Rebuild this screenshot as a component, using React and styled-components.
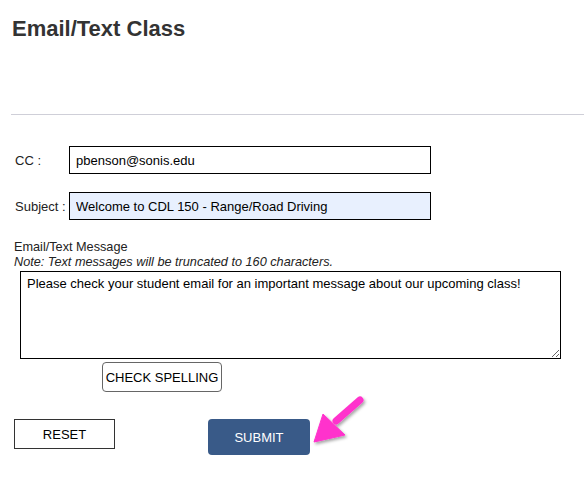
import React from "react";
import styled, { createGlobalStyle } from "styled-components";

const GlobalStyle = createGlobalStyle`
  body {
    margin: 0;
    background: #fff;
    font-family: "Liberation Sans", Arial, sans-serif;
    color: #000;
  }
`;

const App = () => {
  return (
    <Page>
      <GlobalStyle />
      <Title>Email/Text Class</Title>
      <Divider />
      <Form>
        <FieldRow>
          <Label>CC :</Label>
          <TextInput defaultValue="pbenson@sonis.edu" />
        </FieldRow>
        <FieldRow>
          <Label>Subject :</Label>
          <TextInput filled defaultValue="Welcome to CDL 150 - Range/Road Driving" />
        </FieldRow>
        <MessageBlock>
          <MessageLabel>Email/Text Message</MessageLabel>
          <Note>Note: Text messages will be truncated to 160 characters.</Note>
          <MessageBox defaultValue="Please check your student email for an important message about our upcoming class!" />
        </MessageBlock>
        <SpellButton>CHECK SPELLING</SpellButton>
        <ActionRow>
          <ResetButton>RESET</ResetButton>
          <SubmitButton>SUBMIT</SubmitButton>
          <Arrow width="70" height="60" viewBox="0 0 70 60">
            <defs>
              <filter id="sh" x="-20%" y="-20%" width="150%" height="150%">
                <feDropShadow dx="1.5" dy="2" stdDeviation="1.5" floodColor="#000" floodOpacity="0.35" />
              </filter>
            </defs>
            <g filter="url(#sh)" fill="#ff33cc" stroke="#ff33cc">
              <line x1="52" y1="10" x2="28" y2="31" strokeWidth="7" strokeLinecap="round" />
              <polygon points="6,52 15,24 37,45" strokeWidth="1" strokeLinejoin="round" />
            </g>
          </Arrow>
        </ActionRow>
      </Form>
    </Page>
  );
};

const Page = styled.div`
  width: 584px;
  min-height: 478px;
  padding-top: 17px;
  box-sizing: border-box;
`;

const Title = styled.h1`
  margin: 0 0 0 12px;
  font-size: 22px;
  line-height: 24px;
  font-weight: bold;
  color: #333;
`;

const Divider = styled.hr`
  margin: 73px 0 0 11px;
  border: 0;
  border-top: 1px solid #cfcfd8;
  height: 0;
`;

const Form = styled.div`
  display: flex;
  flex-direction: column;
  padding-top: 31px;
`;

const FieldRow = styled.div`
  display: flex;
  align-items: center;
  margin-bottom: 18px;
`;

const Label = styled.span`
  width: 54px;
  padding-left: 15px;
  font-size: 13px;
  color: #222;
`;

const TextInput = styled.input`
  width: 362px;
  height: 28px;
  box-sizing: border-box;
  border: 1px solid #000;
  padding: 0 6px;
  font-family: "Liberation Sans", Arial, sans-serif;
  font-size: 13px;
  color: #000;
  background: ${(p) => (p.filled ? "#e8f0fe" : "#fff")};
  outline: none;
`;

const MessageBlock = styled.div`
  display: flex;
  flex-direction: column;
  padding-left: 14px;
  margin-top: 2px;
`;

const MessageLabel = styled.div`
  font-size: 12.7px;
  line-height: 15px;
  color: #222;
`;

const Note = styled.div`
  font-size: 12.7px;
  line-height: 15px;
  font-style: italic;
  color: #222;
`;

const MessageBox = styled.textarea`
  margin: 1px 0 0 6px;
  width: 541px;
  height: 88px;
  box-sizing: border-box;
  border: 1px solid #000;
  padding: 4px 6px;
  font-family: "Liberation Sans", Arial, sans-serif;
  font-size: 13px;
  color: #000;
  resize: vertical;
  outline: none;
`;

const SpellButton = styled.button`
  align-self: flex-start;
  margin: 3px 0 0 102px;
  width: 120px;
  height: 30px;
  border: 1px solid #666;
  border-radius: 4px;
  background: #fff;
  font-family: "Liberation Sans", Arial, sans-serif;
  font-size: 13px;
  color: #000;
  padding: 0;
`;

const ActionRow = styled.div`
  position: relative;
  display: flex;
  align-items: flex-start;
  margin-top: 27px;
  padding-left: 14px;
`;

const ResetButton = styled.button`
  width: 101px;
  height: 30px;
  border: 1px solid #333;
  border-radius: 0;
  background: #fff;
  font-family: "Liberation Sans", Arial, sans-serif;
  font-size: 13px;
  color: #000;
  padding: 0;
`;

const SubmitButton = styled.button`
  margin-left: 93px;
  width: 102px;
  height: 36px;
  border: 0;
  border-radius: 4px;
  background: #395a88;
  font-family: "Liberation Sans", Arial, sans-serif;
  font-size: 13px;
  color: #fff;
  padding: 0;
`;

const Arrow = styled.svg`
  position: absolute;
  left: 308px;
  top: -29px;
  overflow: visible;
`;

export default App;
